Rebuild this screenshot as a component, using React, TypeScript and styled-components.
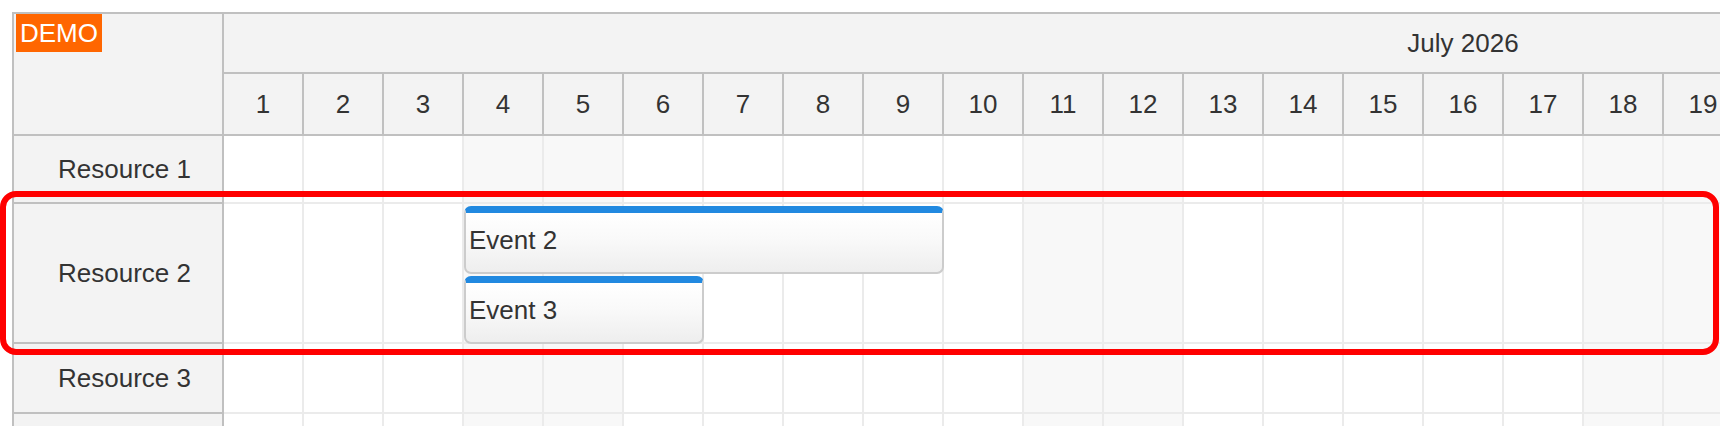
import React from "react";
import styled, { createGlobalStyle } from "styled-components";

const GlobalStyle = createGlobalStyle`
  html, body {
    margin: 0;
    padding: 0;
    background: #ffffff;
    overflow: hidden;
  }
  body {
    font-family: "Liberation Sans", Arial, sans-serif;
    color: #333333;
  }
`;

const HEADER_BORDER = "#c0c0c0";
const GRID_LINE = "#ebebeb";
const CELL_W = 80;
const LANE_H = 70;

const Page = styled.div`
  position: relative;
  width: 1720px;
  height: 426px;
  box-sizing: border-box;
  padding: 12px 0 0 12px;
  overflow: hidden;
`;

const Scheduler = styled.div`
  display: grid;
  grid-template-columns: 210px ${31 * CELL_W}px;
  width: max-content;
  border-top: 2px solid ${HEADER_BORDER};
  border-left: 2px solid ${HEADER_BORDER};
  font-size: 26px;
  color: #333333;
`;

const Corner = styled.div`
  box-sizing: border-box;
  background: #f3f3f3;
  border-right: 2px solid ${HEADER_BORDER};
  border-bottom: 2px solid ${HEADER_BORDER};
  padding-left: 2px;
`;

const DemoBadge = styled.span`
  display: inline-block;
  height: 38px;
  line-height: 38px;
  padding: 0 4px;
  background: #ff6600;
  color: #ffffff;
  font-size: 26px;
`;

const TimeHeader = styled.div`
  display: flex;
  flex-direction: column;
`;

const MonthCell = styled.div`
  box-sizing: border-box;
  height: 60px;
  display: flex;
  align-items: center;
  justify-content: center;
  background: #f3f3f3;
  border-right: 2px solid ${HEADER_BORDER};
  border-bottom: 2px solid ${HEADER_BORDER};
`;

const DayRow = styled.div`
  display: flex;
`;

const DayCell = styled.div`
  box-sizing: border-box;
  flex: 0 0 ${CELL_W}px;
  height: 62px;
  display: flex;
  align-items: center;
  justify-content: center;
  background: #f3f3f3;
  border-right: 2px solid ${HEADER_BORDER};
  border-bottom: 2px solid ${HEADER_BORDER};
`;

const RowHeader = styled.div<{ $h: number }>`
  box-sizing: border-box;
  height: ${(p) => p.$h}px;
  display: flex;
  align-items: center;
  padding-left: 44px;
  background: #f3f3f3;
  border-right: 2px solid ${HEADER_BORDER};
  border-bottom: 2px solid ${HEADER_BORDER};
  white-space: nowrap;
`;

const CellRow = styled.div<{ $h: number }>`
  position: relative;
  display: flex;
  height: ${(p) => p.$h}px;
`;

const Cell = styled.div<{ $weekend: boolean }>`
  box-sizing: border-box;
  flex: 0 0 ${CELL_W}px;
  height: 100%;
  background: ${(p) => (p.$weekend ? "#f8f8f8" : "#ffffff")};
  border-right: 2px solid ${GRID_LINE};
  border-bottom: 2px solid ${GRID_LINE};
`;

const EventBox = styled.div`
  position: absolute;
  box-sizing: border-box;
  height: 68px;
  display: flex;
  align-items: center;
  padding: 0 0 4px 3px;
  border: 2px solid #cccccc;
  border-top: 7px solid #2189e0;
  border-radius: 7px;
  background: linear-gradient(to bottom, #ffffff 0%, #f9f9f9 45%, #eeeeee 100%);
  color: #333333;
  font-size: 26px;
  white-space: nowrap;
  overflow: hidden;
`;

const Highlight = styled.div`
  position: absolute;
  left: 0;
  top: 191px;
  width: 1719px;
  height: 164px;
  box-sizing: border-box;
  border: 6px solid #ff0000;
  border-radius: 16px;
  pointer-events: none;
`;

type Ev = { id: number; name: string; start: number; days: number; lane: number };
type Resource = { name: string; h: number; events: Ev[] };

const resources: Resource[] = [
  { name: "Resource 1", h: 68, events: [] },
  {
    name: "Resource 2",
    h: 140,
    events: [
      { id: 2, name: "Event 2", start: 3, days: 6, lane: 0 },
      { id: 3, name: "Event 3", start: 3, days: 3, lane: 1 },
    ],
  },
  { name: "Resource 3", h: 70, events: [] },
  { name: "Resource 4", h: 70, events: [] },
];

const days = Array.from({ length: 31 }, (_, i) => i + 1);
// July 1, 2026 is a Wednesday
const isWeekend = (d: number) => {
  const dow = (3 + (d - 1)) % 7;
  return dow === 6 || dow === 0;
};

export default function App() {
  return (
    <>
      <GlobalStyle />
      <Page>
        <Scheduler>
          <Corner>
            <DemoBadge>DEMO</DemoBadge>
          </Corner>
          <TimeHeader>
            <MonthCell>July 2026</MonthCell>
            <DayRow>
              {days.map((d) => (
                <DayCell key={d}>{d}</DayCell>
              ))}
            </DayRow>
          </TimeHeader>
          {resources.map((r) => (
            <React.Fragment key={r.name}>
              <RowHeader $h={r.h}>{r.name}</RowHeader>
              <CellRow $h={r.h}>
                {days.map((d) => (
                  <Cell key={d} $weekend={isWeekend(d)} />
                ))}
                {r.events.map((e) => (
                  <EventBox
                    key={e.id}
                    style={{
                      left: e.start * CELL_W,
                      width: e.days * CELL_W,
                      top: 2 + e.lane * LANE_H,
                    }}
                  >
                    {e.name}
                  </EventBox>
                ))}
              </CellRow>
            </React.Fragment>
          ))}
        </Scheduler>
        <Highlight />
      </Page>
    </>
  );
}
